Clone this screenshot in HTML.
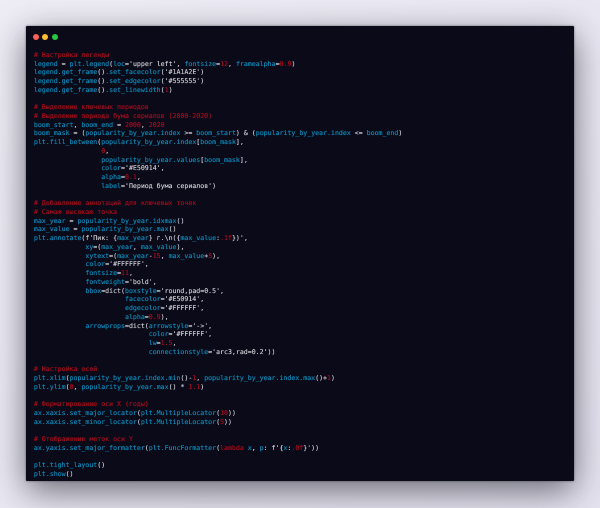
<!DOCTYPE html>
<html><head><meta charset="utf-8"><style>
html,body{margin:0;padding:0}
body{width:600px;height:508px;overflow:hidden;position:relative;background:linear-gradient(135deg,#eeecf5,#e5e3ef)}
#w{position:absolute;left:26.4px;top:26px;width:547.2px;height:455px;background:#0a0a18;box-shadow:0 10px 34px rgba(30,30,40,.62),0 0 2px rgba(40,40,50,.6);border-radius:1px}
.d{position:absolute;top:7.7px;width:6px;height:6px;border-radius:50%}
pre{position:absolute;left:7.5px;top:24.8px;margin:0;font:6.58px/8.73px "DejaVu Sans Mono","Liberation Mono",monospace;color:#0c86b4;text-shadow:0 0 .4px currentColor;text-rendering:geometricPrecision;filter:blur(.35px)}
i{font-style:normal;color:#a00c1e}
b{font-weight:normal;color:#c4c4cc}
u{text-decoration:none;color:#a50c20}
</style></head><body><div id="w">
<div class="d" style="left:6.6px;background:#ff5f57"></div><div class="d" style="left:16.1px;background:#febc2e"></div><div class="d" style="left:25.4px;background:#28c840"></div>
<pre><i># Настройка легенды</i>
legend <b>=</b> plt.legend<b>(</b>loc<b>='upper left',</b> fontsize<b>=</b><u>12</u><b>,</b> framealpha<b>=</b><u>0.9</u><b>)</b>
legend.get_frame<b>()</b>.set_facecolor<b>('#1A1A2E')</b>
legend.get_frame<b>()</b>.set_edgecolor<b>('#555555')</b>
legend.get_frame<b>()</b>.set_linewidth<b>(</b><u>1</u><b>)</b>

<i># Выделение ключевых периодов</i>
<i># Выделение периода бума сериалов (2000-2020)</i>
boom_start<b>,</b> boom_end <b>=</b> <u>2000</u><b>,</b> <u>2020</u>
boom_mask <b>=</b> <b>(</b>popularity_by_year.index <b>&gt;=</b> boom_start<b>)</b> <b>&amp;</b> <b>(</b>popularity_by_year.index <b>&lt;=</b> boom_end<b>)</b>
plt.fill_between<b>(</b>popularity_by_year.index<b>[</b>boom_mask<b>],</b>
                 <u>0</u><b>,</b>
                 popularity_by_year.values<b>[</b>boom_mask<b>],</b>
                 color<b>='#E50914',</b>
                 alpha<b>=</b><u>0.1</u><b>,</b>
                 label<b>='Период бума сериалов')</b>

<i># Добавление аннотаций для ключевых точек</i>
<i># Самая высокая точка</i>
max_year <b>=</b> popularity_by_year.idxmax<b>()</b>
max_value <b>=</b> popularity_by_year.max<b>()</b>
plt.annotate<b>(f'Пик: {</b>max_year<b>} г.\n({</b>max_value<b>:</b><u>.1f</u><b>})',</b>
             xy<b>=(</b>max_year<b>,</b> max_value<b>),</b>
             xytext<b>=(</b>max_year<b>-</b><u>15</u><b>,</b> max_value<b>+</b><u>5</u><b>),</b>
             color<b>='#FFFFFF',</b>
             fontsize<b>=</b><u>11</u><b>,</b>
             fontweight<b>='bold',</b>
             bbox<b>=dict(</b>boxstyle<b>='round,pad=0.5',</b>
                       facecolor<b>='#E50914',</b>
                       edgecolor<b>='#FFFFFF',</b>
                       alpha<b>=</b><u>0.9</u><b>),</b>
             arrowprops<b>=dict(</b>arrowstyle<b>='-&gt;',</b>
                             color<b>='#FFFFFF',</b>
                             lw<b>=</b><u>1.5</u><b>,</b>
                             connectionstyle<b>='arc3,rad=0.2'))</b>

<i># Настройка осей</i>
plt.xlim<b>(</b>popularity_by_year.index.min<b>()-</b><u>1</u><b>,</b> popularity_by_year.index.max<b>()+</b><u>1</u><b>)</b>
plt.ylim<b>(</b><u>0</u><b>,</b> popularity_by_year.max<b>() *</b> <u>1.1</u><b>)</b>

<i># Форматирование оси X (годы)</i>
ax.xaxis.set_major_locator<b>(</b>plt.MultipleLocator<b>(</b><u>10</u><b>))</b>
ax.xaxis.set_minor_locator<b>(</b>plt.MultipleLocator<b>(</b><u>5</u><b>))</b>

<i># Отображение меток оси Y</i>
ax.yaxis.set_major_formatter<b>(</b>plt.FuncFormatter<b>(</b><i>lambda</i> x<b>,</b> p<b>: f'{</b>x<b>:</b><u>.0f</u><b>}'))</b>

plt.tight_layout<b>()</b>
plt.show<b>()</b></pre>
</div></body></html>
